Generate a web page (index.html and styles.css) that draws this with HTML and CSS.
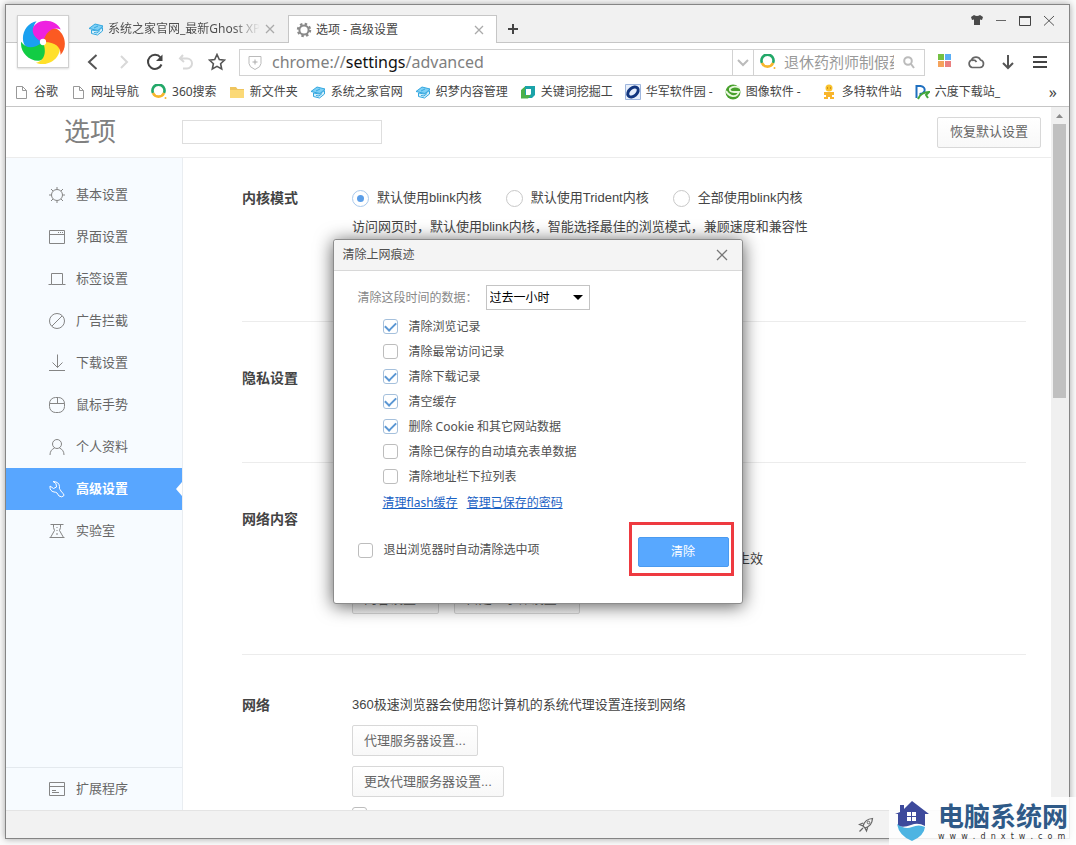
FILE: index.html
```html
<!DOCTYPE html>
<html lang="zh-CN">
<head>
<meta charset="utf-8">
<title>选项 - 高级设置</title>
<link rel="stylesheet" href="styles.css">
</head>
<body>
<svg class="defs" aria-hidden="true">
  <symbol id="cube" viewBox="0 0 16 16"><path d="M1 7.500L7 3l8 2-5 4.500z" fill="#7fd0f5" stroke="#35a8e0"/><path d="M3.500 9v3.500l6 1.500 5-4V6.500L9.500 10z" fill="#d6f0fb" stroke="#35a8e0"/><path d="M6 7l4-2M6 11.500l3 .500 3-2.500" fill="none" stroke="#35a8e0"/></symbol>
  <symbol id="file" viewBox="0 0 16 16"><path d="M3.500 2.500h6l4 4v8h-10zM9.500 2.500v4h4" fill="#fff" stroke="#999"/></symbol>
  <symbol id="so" viewBox="0 0 16 16"><path d="M2 9a6 6 0 1 1 11 0" fill="none" stroke="#23a869" stroke-width="2.600"/><path d="M2 9a6 6 0 0 0 11 0" fill="none" stroke="#f7b52c" stroke-width="2.600"/><circle cx="14.500" cy="14" r="1" fill="#f7b52c"/></symbol>
  <symbol id="close" viewBox="0 0 12 12"><path d="M2 2l8 8M10 2l-8 8" fill="none" stroke="currentColor" stroke-width="1.300"/></symbol>
  <symbol id="petal" viewBox="-21 -21 42 42"><path d="M0 0C-9-3-13-12-7-17 1-23 13-20 17-12 10-15 3-11 0 0z"/></symbol>
</svg>

<div class="window">
  <header class="tabstrip">
    <div class="tab tab-back"><svg class="i16"><use href="#cube"/></svg><span class="tab-text fade">系统之家官网_最新Ghost XP</span><button class="tab-close" aria-label="关闭标签"><svg class="i12"><use href="#close"/></svg></button></div>
    <div class="tab tab-active"><svg class="i16" viewBox="0 0 16 16"><circle cx="8" cy="8" r="6" fill="none" stroke="#8a8a8a" stroke-width="2.400" stroke-dasharray="2.400 2.310"/><circle cx="8" cy="8" r="4.600" fill="none" stroke="#8a8a8a" stroke-width="2"/></svg><span class="tab-text">选项 - 高级设置</span><button class="tab-close" aria-label="关闭标签"><svg class="i12"><use href="#close"/></svg></button></div>
    <button class="newtab" aria-label="新标签"><svg class="i12" viewBox="0 0 12 12"><path d="M6 1v10M1 6h10" stroke="#444" stroke-width="2"/></svg></button>
    <div class="controls">
      <button aria-label="皮肤"><svg class="i14" viewBox="0 0 14 14"><path d="M4 1q3 2 6 0l3 2-1 3-2-.500V11H4V5.500L2 6 1 3z" fill="#4a4a4a"/></svg></button>
      <button aria-label="最小化"><svg class="i14" viewBox="0 0 14 14"><path d="M2 6.500h10" stroke="#666"/></svg></button>
      <button aria-label="最大化"><svg class="i14" viewBox="0 0 14 14"><path d="M1.500 2.500h11v9h-11z" fill="none" stroke="#444"/><path d="M1 3h12" stroke="#444" stroke-width="2"/></svg></button>
      <button aria-label="关闭"><svg class="i14" viewBox="0 0 14 14"><path d="M2 2l10 9.500M12 2L2 11.500" stroke="#555"/></svg></button>
    </div>
  </header>

  <button class="brand" aria-label="浏览器菜单">
    <svg viewBox="-21 -21 42 42">
      <g fill="#1aa0f0"><path transform="rotate(-72)" d="M0 0C-9-3-13-12-7-17 1-23 13-20 17-12 10-15 3-11 0 0z"/></g>
      <g fill="#12cc44"><path transform="rotate(-144)" d="M0 0C-9-3-13-12-7-17 1-23 13-20 17-12 10-15 3-11 0 0z"/></g>
      <g fill="#ffe02a"><path transform="rotate(144)" d="M0 0C-9-3-13-12-7-17 1-23 13-20 17-12 10-15 3-11 0 0z"/></g>
      <g fill="#fb5a22"><path transform="rotate(72)" d="M0 0C-9-3-13-12-7-17 1-23 13-20 17-12 10-15 3-11 0 0z"/></g>
      <g fill="#ee22e0"><path d="M0 0C-9-3-13-12-7-17 1-23 13-20 17-12 10-15 3-11 0 0z"/></g>
      <circle r="3" fill="#fff"/>
    </svg>
  </button>

  <nav class="toolbar" aria-label="导航">
    <div class="nav-buttons">
      <button aria-label="后退"><svg class="i18" viewBox="0 0 18 18"><path d="M12.500 2L5 9l7.500 7" fill="none" stroke="#555" stroke-width="2"/></svg></button>
      <button aria-label="前进"><svg class="i18" viewBox="0 0 18 18"><path d="M6 3l6 6-6 6" fill="none" stroke="#d8d8d8" stroke-width="2"/></svg></button>
      <button aria-label="刷新"><svg class="i18" viewBox="0 0 18 18"><path d="M14.500 4.500A7 7 0 1 0 15.500 11.500" fill="none" stroke="#444" stroke-width="2"/><path d="M16.500 1.500V8H10z" fill="#444"/></svg></button>
      <button aria-label="撤销"><svg class="i18" viewBox="0 0 18 18"><path d="M6 2L3 5.500 7 9M3 5.500h7a5 5 0 0 1 0 10H6" fill="none" stroke="#d8d8d8" stroke-width="2"/></svg></button>
      <button aria-label="收藏"><svg class="i18" viewBox="0 0 18 18"><path d="M9 1.500l2.300 5 5.200.6-3.900 3.600 1.100 5.300L9 13.400 4.300 16l1.100-5.300L1.500 7.100l5.200-.6z" fill="none" stroke="#555" stroke-width="1.600"/></svg></button>
    </div>
    <div class="omnibox">
      <svg class="i16 shield" viewBox="0 0 16 16"><path d="M2 1.500h12v7q0 3.500-6 6-6-2.500-6-6z" fill="none" stroke="#bbb"/><path d="M8 4.500v5M5.500 7h5" stroke="#aaa"/></svg>
      <div class="url">chrome://<b>settings</b>/advanced</div>
      <button class="drop" aria-label="历史网址"><svg class="i14" viewBox="0 0 14 14"><path d="M2 5l5 5 5-5" fill="none" stroke="#bbb" stroke-width="2"/></svg></button>
      <div class="search"><svg class="i16"><use href="#so"/></svg><input aria-label="搜索" placeholder="退休药剂师制假药"><button aria-label="搜索"><svg class="i14" viewBox="0 0 14 14"><circle cx="6" cy="6" r="3.800" fill="none" stroke="#bbb" stroke-width="2"/><path d="M9 9l3 4" stroke="#bbb" stroke-width="2"/></svg></button></div>
    </div>
    <div class="tools">
      <button aria-label="应用"><svg class="i18" viewBox="0 0 18 18"><path d="M3 1h6v6H3z" fill="#74c043"/><path d="M10 1h6v6h-6z" fill="#5aaef5"/><path d="M3 8h6v6H3z" fill="#f5a35c"/><path d="M10 8h6v6h-6z" fill="#ea8080"/></svg></button>
      <button aria-label="云同步"><svg class="i18" viewBox="0 0 18 18"><path d="M5 14.500a4 4 0 0 1-.5-7.500A5 5 0 0 1 13.500 7a3.800 3.800 0 0 1-.5 7.500zM5 7.500q3-1 4.500 1.500" fill="none" stroke="#666" stroke-width="1.700"/></svg></button>
      <button aria-label="下载"><svg class="i18" viewBox="0 0 18 18"><path d="M9 2v13M4 10l5 5 5-5" fill="none" stroke="#555" stroke-width="2"/></svg></button>
      <button aria-label="菜单"><svg class="i18" viewBox="0 0 18 18"><path d="M2 4h14M2 9h14M2 14h14" stroke="#444" stroke-width="2"/></svg></button>
    </div>
  </nav>

  <nav class="bookmarks" aria-label="书签">
    <a href="#"><svg class="i16"><use href="#file"/></svg>谷歌</a>
    <a href="#"><svg class="i16"><use href="#file"/></svg>网址导航</a>
    <a href="#"><svg class="i16"><use href="#so"/></svg>360搜索</a>
    <a href="#"><svg class="i16" viewBox="0 0 16 16"><path d="M1 3h6l1.500 2H15v9H1z" fill="#efc55e"/><path d="M1 6h14v8H1z" fill="#fbd977"/></svg>新文件夹</a>
    <a href="#"><svg class="i16"><use href="#cube"/></svg>系统之家官网</a>
    <a href="#"><svg class="i16"><use href="#cube"/></svg>织梦内容管理</a>
    <a href="#"><svg class="i16" viewBox="0 0 16 16"><path d="M5 2h10v9l-3 3H5z" fill="#1ba3a9"/><path d="M1 6l4-3.500V11h6l-3 3.500H1z" fill="#4cb04a"/><path d="M6 5h5v5l-1 1H6z" fill="#fff"/></svg>关键词挖掘工</a>
    <a href="#"><svg class="i16" viewBox="0 0 16 16"><path d="M.5.500h15v15H.5z" fill="#e7effb" stroke="#9fb6de"/><ellipse cx="8" cy="8" rx="6" ry="4" transform="rotate(-40 8 8)" fill="none" stroke="#12367f" stroke-width="3"/></svg>华军软件园 -</a>
    <a href="#"><svg class="i16" viewBox="0 0 16 16"><circle cx="8" cy="8" r="7.500" fill="#47a02c"/><path d="M15 4Q9 1 5 4.500 4 8 9 8h5Q12 13 7 12 3 11 1 7" fill="none" stroke="#e8f7dd" stroke-width="1.800"/></svg>图像软件 -</a>
    <a href="#" class="wide"><svg class="i16" viewBox="0 0 16 16"><circle cx="8" cy="4" r="3.500" fill="#f9c32c"/><path d="M3 8h10v3h-2v2h2v2H9v-2H7v2H3v-2h2v-2H3z" fill="#f9b52c"/><path d="M6 4h1M9 4h1" stroke="#a05a10"/></svg>多特软件站</a>
    <a href="#"><svg class="i16" viewBox="0 0 16 16"><path d="M2.500 14V2h4q5 1 4 5-1 3-5 3" fill="none" stroke="#1e6fc0" stroke-width="2"/><path d="M4 15q3-7 11-7l-3 3 2 3" fill="none" stroke="#43a63a" stroke-width="2"/></svg>六度下载站_</a>
    <button class="more" aria-label="更多书签">»</button>
  </nav>

  <div class="viewport">
    <div class="page">
      <header class="page-head">
        <h1>选项</h1>
        <input class="find" type="text" aria-label="搜索设置">
        <button class="btn reset">恢复默认设置</button>
      </header>
      <div class="columns">
        <nav class="side" aria-label="设置分类">
          <a href="#"><svg class="i18" viewBox="0 0 18 18"><circle cx="9" cy="9" r="5.500"/><path d="M9 1v2.500M9 14.500V17M1 9h2.500M14.500 9H17M3 3l2 2M13 13l2 2M3 15l2-2M13 5l2-2"/></svg>基本设置</a>
          <a href="#"><svg class="i18" viewBox="0 0 18 18"><path d="M1.500 2.500h15v13h-15zM1.500 6.500h15M10 4.500h1M12 4.500h1M14 4.500h1"/></svg>界面设置</a>
          <a href="#"><svg class="i18" viewBox="0 0 18 18"><path d="M.5 14.500h3v-11h11v11h3M3.500 14.500h11"/></svg>标签设置</a>
          <a href="#"><svg class="i18" viewBox="0 0 18 18"><circle cx="9" cy="9" r="7.500"/><path d="M4 14L14 4"/></svg>广告拦截</a>
          <a href="#"><svg class="i18" viewBox="0 0 18 18"><path d="M9.500 .500v13M4.500 8.500l5 5 5-5M1 16.500h16"/></svg>下载设置</a>
          <a href="#"><svg class="i18" viewBox="0 0 18 18"><rect x="1.500" y="1.500" width="15" height="15" rx="6"/><path d="M1.500 7.500h15M9.500 1.500v6"/></svg>鼠标手势</a>
          <a href="#"><svg class="i18" viewBox="0 0 18 18"><circle cx="9" cy="6" r="4.500"/><path d="M2 17q0-5 4.500-7M16 17q0-5-4.500-7"/></svg>个人资料</a>
          <a href="#" class="current" aria-current="page"><svg class="i18" viewBox="0 0 18 18"><path d="M5 1.500l3 2 .5 3.500-3 1.500L2 6q-.5 5 4 6 2 0 3 1l2 3q3 2 5-.5 0-2-2-3l-2-3q-1-1-.5-3-.5-5-6.500-5z"/></svg>高级设置</a>
          <a href="#"><svg class="i18" viewBox="0 0 18 18"><path d="M2.500 2.500h13M5.500 2.500v3l1 3-4 7M12.500 2.500v3l-1 3 4 7M1.500 15.500h15M9 5v1M9 8v1M8 12h2"/></svg>实验室</a>
          <a href="#" class="ext"><svg class="i18" viewBox="0 0 18 18"><path d="M1.500 2.500h15v13h-15zM1.500 6.500h15M4 10.500h4M4 12.500h7"/></svg>扩展程序</a>
        </nav>
        <main class="content">
          <section class="first">
            <h2>内核模式</h2>
            <div class="fields">
              <div class="radios">
                <label><input type="radio" name="core" checked>默认使用blink内核</label>
                <label><input type="radio" name="core">默认使用Trident内核</label>
                <label><input type="radio" name="core">全部使用blink内核</label>
              </div>
              <p>访问网页时，默认使用blink内核，智能选择最佳的浏览模式，兼顾速度和兼容性</p>
            </div>
          </section>
          <section class="privacy"><h2>隐私设置</h2></section>
          <section class="webcontent">
            <h2>网络内容</h2>
            <div class="fields">
              <p class="note">生效</p>
              <div class="pair"><button class="btn">内容设置...</button><button class="btn">自定义字体设置...</button></div>
            </div>
          </section>
          <section class="network">
            <h2>网络</h2>
            <div class="fields">
              <p>360极速浏览器会使用您计算机的系统代理设置连接到网络</p>
              <button class="btn">代理服务器设置...</button>
              <button class="btn">更改代理服务器设置...</button>
              <input type="checkbox" aria-label="网络选项">
            </div>
          </section>
        </main>
      </div>
    </div>
    <div class="scrollbar"><svg viewBox="0 0 13 17"><path d="M3 11l3.500-4 3.500 4z" fill="#8a8a8a"/></svg><div class="thumb"></div></div>
  </div>

  <footer class="status"><svg class="i16" viewBox="0 0 16 16"><path d="M5 9Q7 2 14.500 1.500 14 9 7 11zM5 6L1.500 7.500 5 9M10 9.500L8.500 14 7 11M1.500 14.500l3.500-3.500" fill="none" stroke="#666" stroke-width="1.200"/><circle cx="10.500" cy="5.500" r="1.300" fill="none" stroke="#666"/></svg></footer>

  <div class="overlay">
    <div class="dialog" role="dialog" aria-labelledby="dlg-title">
      <div class="dialog-head"><span id="dlg-title">清除上网痕迹</span><button aria-label="关闭"><svg class="i14" viewBox="0 0 14 14"><path d="M2 2l10 10M12 2L2 12" stroke="#777" stroke-width="1.300"/></svg></button></div>
      <div class="dialog-body">
        <div class="period"><label for="period">清除这段时间的数据：</label><span class="select"><select id="period"><option>过去一小时</option></select></span></div>
        <div class="checks">
          <label><input type="checkbox" checked>清除浏览记录</label>
          <label><input type="checkbox">清除最常访问记录</label>
          <label><input type="checkbox" checked>清除下载记录</label>
          <label><input type="checkbox" checked>清空缓存</label>
          <label><input type="checkbox" checked>删除 Cookie 和其它网站数据</label>
          <label><input type="checkbox">清除已保存的自动填充表单数据</label>
          <label><input type="checkbox">清除地址栏下拉列表</label>
        </div>
        <div class="links"><a href="#">清理flash缓存</a><a href="#">管理已保存的密码</a></div>
        <div class="actions"><label><input type="checkbox">退出浏览器时自动清除选中项</label><span class="marked"><button class="primary">清除</button></span></div>
      </div>
    </div>
  </div>
</div>

<div class="watermark">
  <svg viewBox="0 0 36 42"><path d="M6 12V5h4v4l8-8 17 13h-4v12q-7-4-14-1T4 26V14H1z" fill="#3d4a9c"/><path d="M3 24q8 6 15 3t13 0q-1 9-13 14Q5 36 3 24z" fill="#4db4e2"/><path d="M13 12h4v4h-4zM18 12h4v4h-4zM13 17h4v4h-4zM18 17h4v4h-4z" fill="#fff"/></svg>
  <div><div class="wm-name">电脑系统网</div><div class="wm-url">w  w  w  .  d  n  x  t  w  .  c  o  m</div></div>
</div>
</body>
</html>
```
FILE: styles.css
```css
* { box-sizing: border-box; }
body {
  margin: 0;
  padding: 4px 6px 6px 5px;
  height: 100vh;
  overflow: hidden;
  background: #fbfbfb;
  font: 12px/20px "Noto Sans", "Noto Sans CJK SC", sans-serif;
  color: #505050;
}
button, input, select { font: inherit; color: inherit; margin: 0; }
button { padding: 0; border: 0; background: none; display: inline-flex; align-items: center; justify-content: center; }
a { color: inherit; text-decoration: none; }
h1, h2, p { margin: 0; font-weight: normal; }
svg { display: block; flex: none; }
.defs { position: absolute; width: 0; height: 0; }
.i12 { width: 12px; height: 12px; }
.i14 { width: 14px; height: 14px; }
.i16 { width: 16px; height: 16px; }
.i18 { width: 18px; height: 18px; }

.window {
  position: relative;
  display: flex;
  flex-direction: column;
  height: 100%;
  border: 1px solid #858585;
  background: #fff;
  box-shadow: 0 0 7px rgba(0, 0, 0, 0.35);
}

.tabstrip { display: flex; height: 38px; padding: 10px 13px 0 74px; background: #f1f1f1; border-bottom: 1px solid #c6c6c6; }
.tab { display: flex; align-items: center; gap: 4px; padding: 0 12px 0 8px; height: 28px; }
.tab-back { width: 208px; }
.tab-active { width: 209px; padding: 0 11px 0 7px; background: #fff; border: 1px solid #c6c6c6; border-bottom: 0; color: #444; }
.tab-text { flex: 1; white-space: nowrap; overflow: hidden; }
.fade { mask-image: linear-gradient(90deg, #000 82%, transparent); }
.tab-close { color: #aaa; }
.newtab { width: 32px; height: 28px; }
.controls { display: flex; gap: 10px; margin-left: auto; height: 12px; align-items: center; }

.brand { position: absolute; left: 11px; top: 10px; width: 52px; height: 53px; background: #fff; border: 1px solid #d0d0d0; box-shadow: 0 1px 2px rgba(0, 0, 0, 0.15); }
.brand svg { width: 44px; height: 44px; }

.toolbar { display: flex; align-items: center; height: 38px; padding: 0 20px 0 78px; }
.nav-buttons { display: flex; gap: 13px; width: 155px; }
.omnibox { flex: 1; display: flex; align-items: stretch; height: 27px; border: 1px solid #d2d2d2; }
.shield { margin: 5px 9px 0 7px; }
.url { flex: 1; font-size: 16px; line-height: 25px; color: #808080; }
.url b { font-weight: normal; color: #111; }
.drop { width: 22px; border-left: 1px solid #d2d2d2; border-right: 1px solid #d2d2d2; }
.search { display: flex; align-items: center; width: 170px; padding: 0 8px 0 6px; gap: 8px; }
.search input { flex: 1; min-width: 0; border: 0; padding: 0; outline: 0; font-size: 15px; line-height: 23px; }
.search input::placeholder { color: #999; }
.tools { display: flex; gap: 14px; padding-left: 10px; }

.bookmarks { display: flex; align-items: center; gap: 12px; height: 26px; padding: 0 12px 4px 7px; border-bottom: 1px solid #c6c6c6; color: #444; white-space: nowrap; }
.bookmarks a { display: flex; align-items: center; gap: 5px; }
.bookmarks .wide { margin-left: 8px; }
.more { margin-left: auto; font-size: 16px; }

.viewport { flex: 1; min-height: 0; display: flex; }
.page { flex: 1; display: flex; flex-direction: column; min-width: 0; font: 13px/20px "Liberation Sans", "Noto Sans CJK SC", sans-serif; }
.page-head { display: flex; align-items: center; height: 51px; padding: 0 10px 0 58px; border-bottom: 1px solid #ececec; }
h1 { width: 118px; font-size: 26px; line-height: 40px; color: #808080; }
.find { width: 200px; height: 24px; border: 1px solid #dedede; background: #fff; }
.btn { height: 31px; padding: 0 11px; border: 1px solid #d8d8d8; border-radius: 2px; background: linear-gradient(#fff, #f8f8f8); color: #666; white-space: nowrap; }
.reset { margin-left: auto; padding: 0 12px; }
.columns { flex: 1; min-height: 0; display: flex; }
.side { display: flex; flex-direction: column; flex: none; width: 177px; padding-top: 16px; background: #f7fbff; border-right: 1px solid #e9edf1; color: #666; }
.side a { position: relative; display: flex; align-items: center; gap: 10px; height: 42px; padding-left: 42px; }
.side svg { fill: none; stroke: #858585; }
.side .current { background: #58a6ff; color: #fff; font-weight: bold; }
.side .current svg { stroke: #fff; }
.side .current::after { content: ""; position: absolute; right: 0; top: 14px; border: 7px solid transparent; border-right: 6px solid #fff; border-left: 0; }
.side .ext { margin-top: auto; height: 43px; border-top: 1px solid #e4e9ee; }

.content { flex: 1; min-width: 0; overflow: hidden; padding: 0 25px 0 59px; color: #444; }
section { display: flex; border-bottom: 1px solid #ececec; }
h2 { width: 110px; flex: none; font-size: 14px; font-weight: bold; line-height: 20px; }
.fields { flex: 1; min-width: 0; }
.first { height: 164px; padding-top: 30px; }
.radios { display: flex; gap: 24px; margin-bottom: 9px; }
.radios label { display: flex; align-items: center; gap: 8px; }
.privacy { height: 141px; padding-top: 46px; }
.webcontent { height: 192px; padding-top: 46px; }
.note { width: 411px; padding-top: 40px; text-align: right; }
.pair { display: flex; gap: 15px; margin-top: 14px; }
.network { padding-top: 40px; border: 0; }
.network .fields { display: flex; flex-direction: column; align-items: flex-start; gap: 10px; }

input[type="checkbox"], input[type="radio"] { appearance: none; flex: none; width: 15px; height: 15px; border: 1px solid #bdbdbd; border-radius: 3px; background: #fff; display: grid; place-items: center; }
input[type="radio"] { width: 17px; height: 17px; border-color: #c8c8c8; border-radius: 50%; }
input[type="radio"]:checked { border-color: #a9c9ec; }
input[type="radio"]:checked::before { content: ""; width: 7px; height: 7px; border-radius: 50%; background: #5b9ee8; }
input[type="checkbox"]:checked { border-color: #a5c0dc; }
input[type="checkbox"]:checked::before { content: ""; width: 9px; height: 5px; margin-top: -3px; border: solid #5b97d4; border-width: 0 0 2px 2px; transform: rotate(-45deg); }

.scrollbar { width: 18px; padding: 0 3px 0 2px; background: #f0f0f0; }
.scrollbar svg { width: 13px; height: 17px; }
.thumb { height: 39%; background: #c0c0c0; }
.status { display: flex; align-items: center; height: 28px; padding-left: 852px; background: #f2f2f2; border-top: 1px solid #e4e4e4; }

.overlay { position: absolute; inset: 0; display: flex; align-items: center; justify-content: center; }
.dialog { width: 410px; border: 1px solid #8c8c8c; border-radius: 3px; background: #fff; box-shadow: 0 2px 18px rgba(0, 0, 0, 0.65); }
.dialog-head { display: flex; align-items: center; justify-content: space-between; height: 31px; padding: 0 13px 0 9px; background: #f4f4f4; border-bottom: 1px solid #d8d8d8; border-radius: 3px 3px 0 0; }
.dialog-body { padding: 14px 13px 36px 24px; }
.dialog label { display: flex; align-items: center; gap: 11px; }
.period { display: flex; align-items: center; gap: 8px; color: #777; }
.dialog .period label { color: #888; }
.select { position: relative; }
.select::after { content: ""; position: absolute; right: 7px; top: 10px; border: 5px solid transparent; border-top-color: #000; border-bottom: 0; pointer-events: none; }
select { display: block; appearance: none; width: 104px; height: 25px; padding: 0 3px; border: 1px solid #c4c4c4; border-radius: 0; background: #fff; color: #000; }
.checks { padding: 4px 0 0 25px; }
.checks label { height: 25px; }
.links { display: flex; gap: 9px; padding: 4px 0 0 25px; color: #1a62c4; }
.links a { text-decoration: underline; }
.actions { display: flex; align-items: flex-start; justify-content: space-between; margin-top: 24px; }
.actions label { height: 26px; }
.marked { position: relative; display: flex; }
.marked::after { content: ""; position: absolute; inset: -15px -5px -9px -9px; border: 3px solid #ee3a40; pointer-events: none; }
.primary { width: 91px; height: 30px; border: 1px solid #4b9bf0; border-radius: 2px; background: #58a8ff; color: #fff; }

.watermark { position: absolute; right: 0; bottom: 0; display: flex; align-items: center; gap: 8px; padding: 2px 8px 2px 5px; background: rgba(255, 255, 255, 0.85); }
.watermark svg { width: 36px; height: 42px; }
.wm-name { font: bold 26px/32px "Noto Sans CJK SC", sans-serif; color: #2f5a88; white-space: nowrap; }
.wm-url { font: 8px/12px "DejaVu Sans", sans-serif; color: #333; white-space: pre; }
```
